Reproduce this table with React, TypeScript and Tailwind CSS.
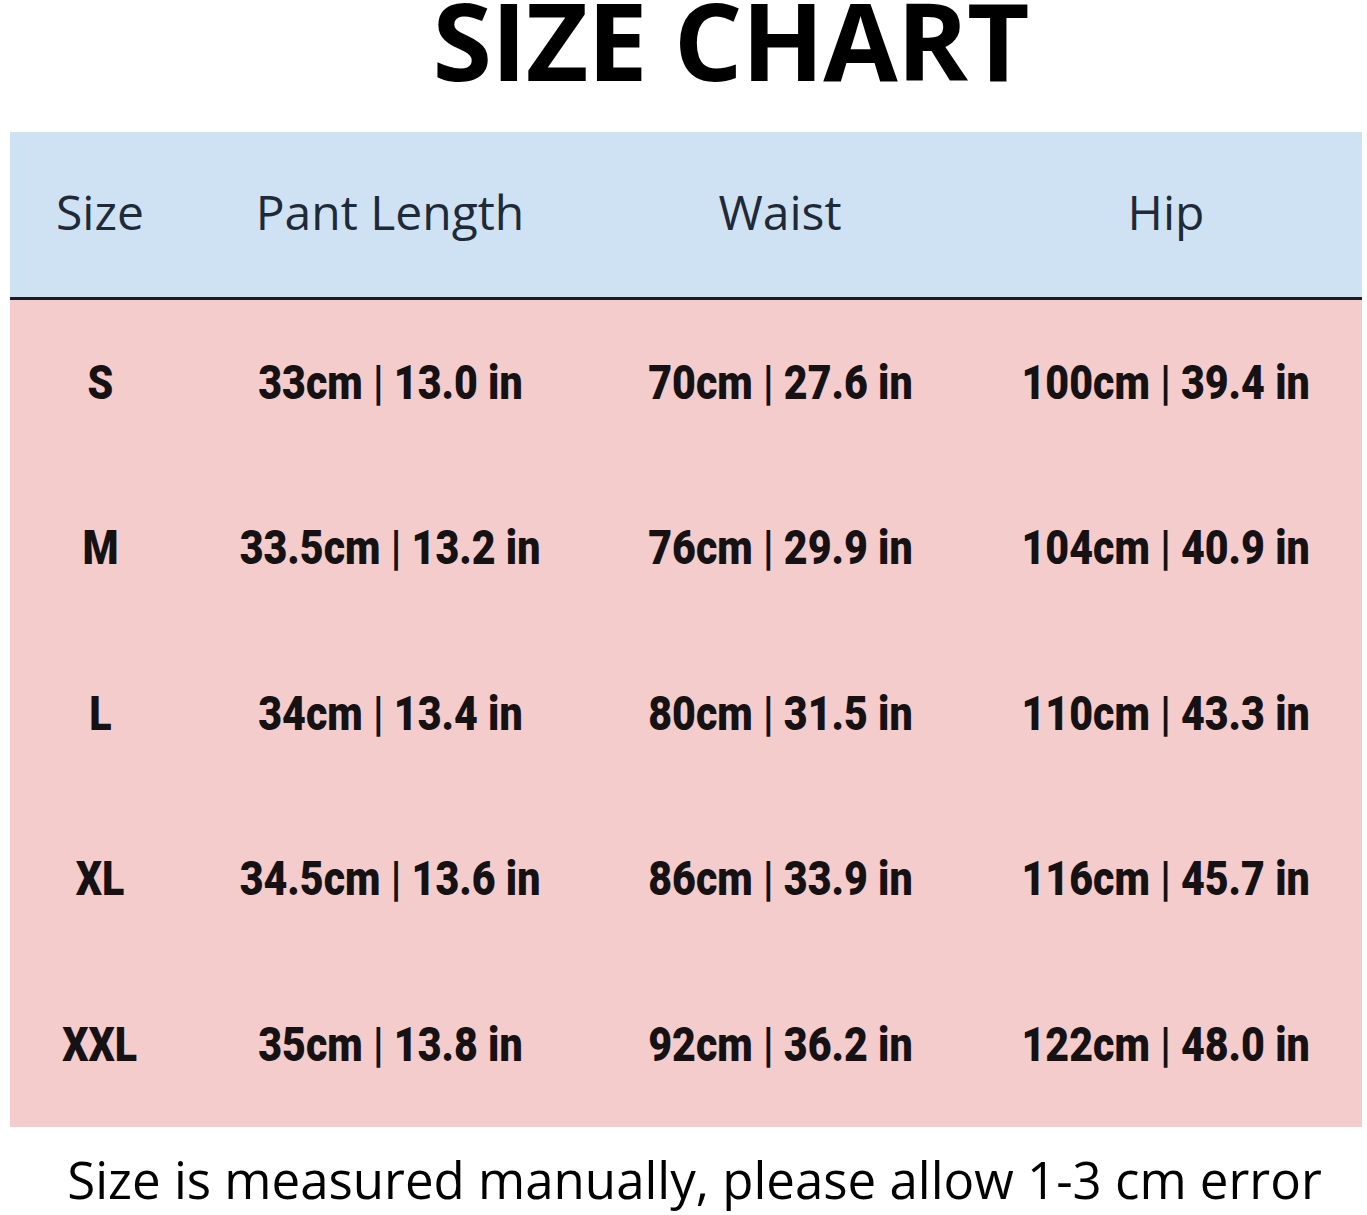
const rows = [
  ["S", "33cm | 13.0 in", "70cm | 27.6 in", "100cm | 39.4 in"],
  ["M", "33.5cm | 13.2 in", "76cm | 29.9 in", "104cm | 40.9 in"],
  ["L", "34cm | 13.4 in", "80cm | 31.5 in", "110cm | 43.3 in"],
  ["XL", "34.5cm | 13.6 in", "86cm | 33.9 in", "116cm | 45.7 in"],
  ["XXL", "35cm | 13.8 in", "92cm | 36.2 in", "122cm | 48.0 in"],
]

const headers = ["Size", "Pant Length", "Waist", "Hip"]

export default function App() {
  return (
    <div className="w-[1367px] h-[1215px] bg-white overflow-hidden font-['Open_Sans',sans-serif]">
      <div className="h-[132px]">
        <h1 className="flex justify-center pl-[94px] text-[108px] leading-[80px] font-bold text-black tracking-[-1px]">
          SIZE CHART
        </h1>
      </div>

      <div className="ml-[10px] mr-[5px]">
        <div className="grid grid-cols-[180px_400px_380px_1fr] h-[165px] items-center bg-[#cfe2f3] text-[#1f2a38] text-[48px]">
          {headers.map((h) => (
            <div key={h} className="text-center pb-[6px]">{h}</div>
          ))}
        </div>
        <div className="h-[3px] bg-[#1c1a22]" />
        <div className="bg-[#f4cccc]">
          {rows.map((r) => (
            <div key={r[0]} className="grid grid-cols-[180px_400px_380px_1fr] h-[165.4px] items-center">
              {r.map((c, i) => (
                <div key={i} className="flex justify-center">
                  <span className="inline-block font-['Roboto',sans-serif] font-black text-[49px] text-[#161214] scale-x-[0.84] whitespace-nowrap">
                    {c}
                  </span>
                </div>
              ))}
            </div>
          ))}
        </div>
      </div>

      <p className="text-center pl-[22px] mt-[27px] text-[51px] leading-none text-black whitespace-nowrap">
        Size is measured manually, please allow 1-3 cm error
      </p>
    </div>
  )
}
